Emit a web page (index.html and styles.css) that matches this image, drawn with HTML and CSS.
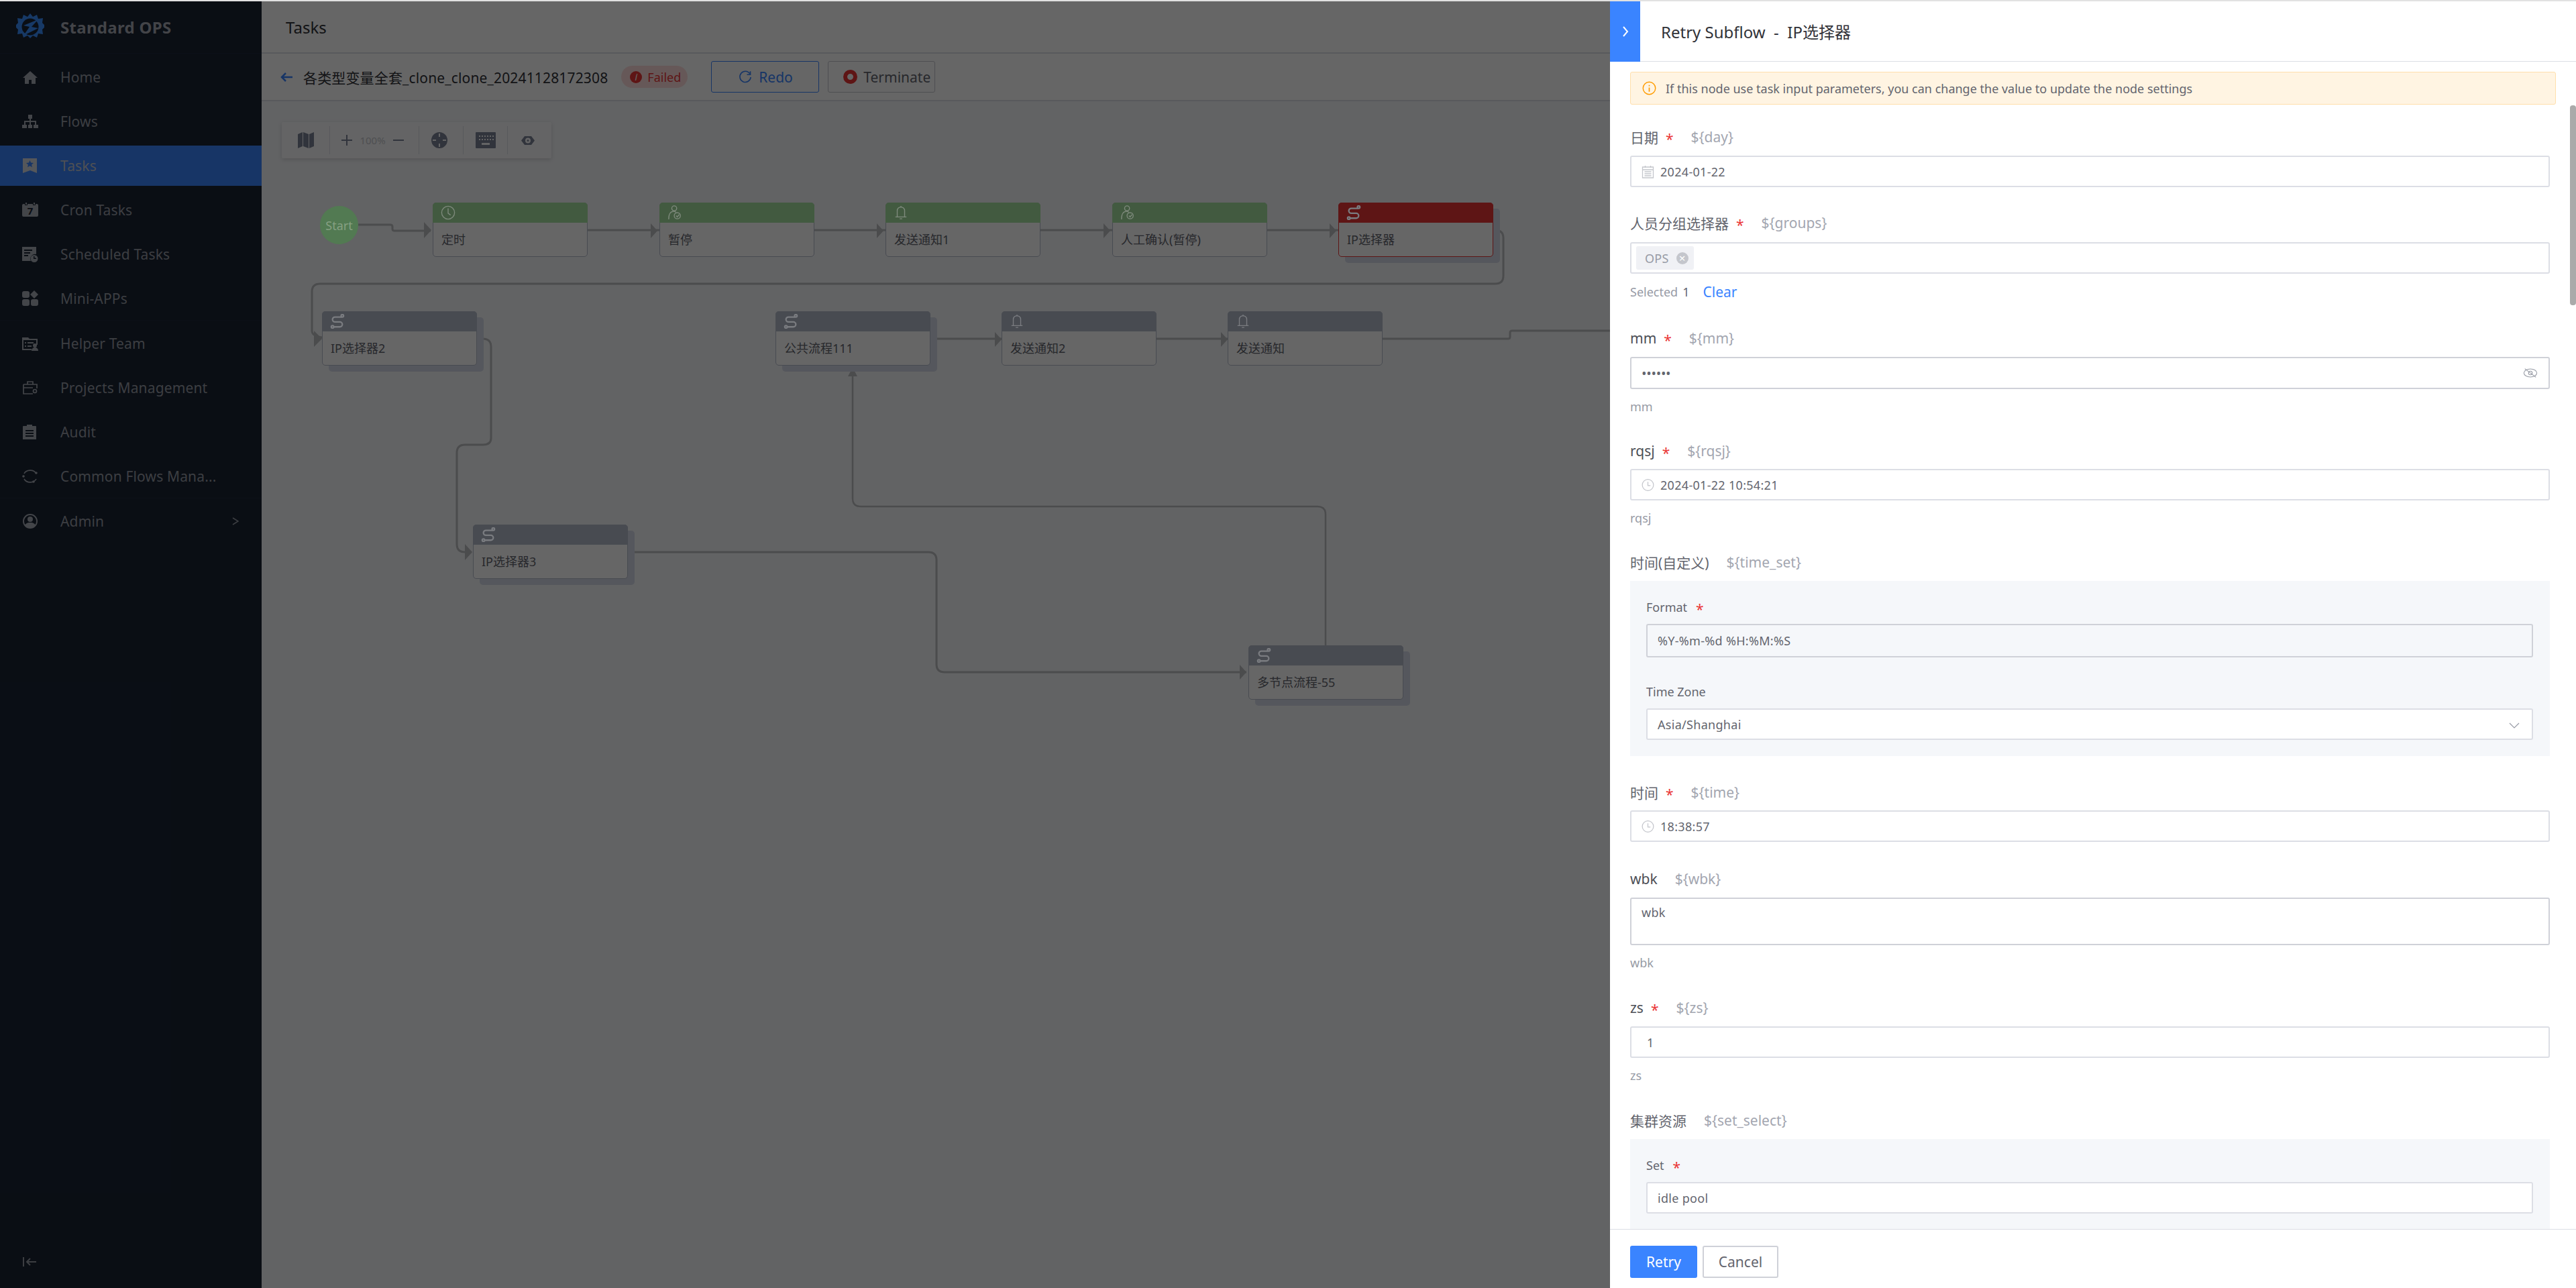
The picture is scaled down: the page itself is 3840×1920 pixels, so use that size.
FILE: index.html
```html
<!DOCTYPE html>
<html lang="en">
<head>
    <meta charset="UTF-8">
    <title>Standard OPS - Tasks</title>
    <link rel="stylesheet" href="styles.css">
</head>
<body>

<div class="top-line"></div>

<div class="app">
    <!-- Sidebar -->
    <aside class="sidebar">
        <div class="brand">
            <svg class="brand-logo" viewBox="0 0 42 42">
                <path fill="#3a8fff" d="M21 0l4 5 6-3 2 6 7-1-1 7 5 5-5 5 1 7-7-1-2 6-6-3-4 4-4-4-6 3-2-6-7 1 1-7-5-5 5-5-1-7 7 1 2-6 6 3z"/>
                <circle cx="21" cy="20" r="12.500" fill="#192334"/>
                <path fill="#3a8fff" d="M33 9L11 18l9 2-9 13 22-11-10-2z"/>
            </svg>
            <span class="brand-name">Standard OPS</span>
        </div>
        <nav class="menu">
            <a class="menu-item"><svg class="menu-icon" viewBox="0 0 24 24"><path d="M12 3L1 13h3v9h6v-6h4v6h6v-9h3z"/></svg>Home</a>
            <a class="menu-item"><svg class="menu-icon" viewBox="0 0 24 24"><path d="M9 2h6v6h-2v3h8v6h3v5h-7v-5h2v-4h-6v4h2v5H9v-5h2v-4H5v4h2v5H0v-5h3v-6h8V8H9z"/></svg>Flows</a>
            <a class="menu-item active"><svg class="menu-icon" viewBox="0 0 24 24"><path fill-rule="evenodd" d="M1 1h21v22l-10-4-11 4zM11.500 4l-1.600 3.500-3.900.4 2.900 2.600-.8 3.800 3.400-2 3.400 2-.8-3.800 2.900-2.600-3.900-.4z"/></svg>Tasks</a>
            <a class="menu-item"><svg class="menu-icon" viewBox="0 0 24 24"><path d="M5 1h2v3H5zM17 1h2v3h-2zM2 3h2v2h4V3h8v2h4V3h2a2 2 0 0 1 2 2v15a2 2 0 0 1-2 2H2a2 2 0 0 1-2-2V5a2 2 0 0 1 2-2z"/><text x="12" y="19" text-anchor="middle" class="cal-day">7</text></svg>Cron Tasks</a>
            <a class="menu-item"><svg class="menu-icon" viewBox="0 0 24 24"><path fill-rule="evenodd" d="M0 1h21v11a7 7 0 0 0-8 10H0zM3 5v2h12V5zM3 9v2h9V9zM3 13v2h6v-2z"/><path fill-rule="evenodd" d="M18 13a5.500 5.500 0 1 1 0 11a5.500 5.500 0 1 1 0-11zM17 15v4h4v-1.500h-2.500V15z"/></svg>Scheduled Tasks</a>
            <a class="menu-item"><svg class="menu-icon" viewBox="0 0 24 24"><rect x="0" y="1" width="11" height="10" rx="3"/><rect x="0" y="13" width="11" height="10" rx="3"/><rect x="13" y="13" width="11" height="10" rx="3"/><path d="M18 0l6 6-6 6-6-6z"/></svg>Mini-APPs</a>
            <div class="menu-divider"></div>
            <a class="menu-item"><svg class="menu-icon" viewBox="0 0 24 24"><path fill-rule="evenodd" d="M0 3h9l2 2h12v9h-2V7H2v13h12v2H0zM4 10h2v2H4zM8 10h9v2H8zM4 15h2v2H4zM8 15h6v2H8z"/><circle cx="19" cy="15" r="3"/><path d="M14 23c0-3 2-5 5-5s5 2 5 5z"/></svg>Helper Team</a>
            <a class="menu-item"><svg class="menu-icon" viewBox="0 0 24 24"><path fill="none" stroke-width="1.700" d="M8 7V3h8v4M2 7h20v6M2 7v14h14M2 12h14"/><circle cx="19" cy="17" r="2.500" fill="none" stroke-width="1.700"/></svg>Projects Management</a>
            <a class="menu-item"><svg class="menu-icon" viewBox="0 0 24 24"><path fill-rule="evenodd" d="M7 1h8v2h5a1 1 0 0 1 1 1v19H1V4a1 1 0 0 1 1-1h5zM5 9v2h12V9zM5 13v2h12v-2zM5 17v2h12v-2z"/></svg>Audit</a>
            <a class="menu-item"><svg class="menu-icon" viewBox="0 0 24 24"><path fill="none" stroke-width="1.600" d="M3 8C6 2 17 1 21 8M21 16c-3 6-14 7-18 0"/><circle cx="2" cy="12" r="1.800"/><circle cx="21" cy="7" r="1.800"/><circle cx="17" cy="20" r="1.800"/></svg><span class="menu-text">Common Flows Mana...</span></a>
            <div class="menu-divider"></div>
            <a class="menu-item"><svg class="menu-icon" viewBox="0 0 24 24"><path fill-rule="evenodd" d="M12 1a11 11 0 1 1 0 22a11 11 0 1 1 0-22zM12 3a9 9 0 0 0-7.500 14c2-2.500 4.500-3 7.500-3s5.500.5 7.500 3A9 9 0 0 0 12 3zM12 5a4 4 0 1 1 0 8a4 4 0 1 1 0-8z"/></svg>Admin<svg class="menu-arrow" viewBox="0 0 10 12"><path d="M1 1l8 5-8 5" fill="none" stroke-width="1.500"/></svg></a>
        </nav>
        <svg class="collapse-icon" viewBox="0 0 22 14"><path d="M1 0v14M20 7H6M11 2L6 7l5 5" fill="none" stroke-width="2"/></svg>
    </aside>

    <!-- Main content -->
    <main class="main">
        <div class="page-title">Tasks</div>
        <div class="task-bar">
            <svg class="back-icon" viewBox="0 0 20 16"><path d="M19 8H3M9 2L3 8l6 6" fill="none" stroke-width="2.500"/></svg>
            <span class="task-name">各类型变量全套_clone_clone_20241128172308</span>
            <span class="status-pill"><span class="status-dot">i</span>Failed</span>
            <button class="btn-redo"><svg class="btn-icon" viewBox="0 0 16 16"><path d="M13.500 4A6.500 6.500 0 1 0 14.500 8" fill="none" stroke-width="1.300"/><path d="M14 1v4h-4" fill="none" stroke-width="1.300"/></svg>Redo</button>
            <button class="btn-terminate"><span class="stop-dot"></span>Terminate</button>
        </div>

        <div class="canvas">
            <div class="toolbar">
                <svg class="tool-map" viewBox="0 0 24 24"><path d="M0 3l7-3v21l-7 3zM8 0l8 3v21l-8-3zM17 3l7-3v21l-7 3z"/></svg>
                <span class="tool-sep"></span>
                <svg class="tool-zoom" viewBox="0 0 16 16"><path d="M8 0v16M0 8h16" fill="none" stroke-width="2"/></svg>
                <span class="tool-percent">100%</span>
                <svg class="tool-zoom" viewBox="0 0 16 16"><path d="M0 8h16" fill="none" stroke-width="2"/></svg>
                <span class="tool-sep sep-a"></span>
                <svg class="tool-locate" viewBox="0 0 24 24"><path fill-rule="evenodd" d="M12 0a12 12 0 1 1 0 24a12 12 0 1 1 0-24zM11 2v5h2V2zM2 11v2h5v-2zM17 11v2h5v-2zM11 17v5h2v-5z"/></svg>
                <span class="tool-sep sep-b"></span>
                <svg class="tool-keys" viewBox="0 0 30 24"><path fill-rule="evenodd" d="M1 0h28a1 1 0 0 1 1 1v22a1 1 0 0 1-1 1H1a1 1 0 0 1-1-1V1a1 1 0 0 1 1-1zM5 5v2h2V5zM9 5v2h2V5zM13 5v2h2V5zM17 5v2h2V5zM21 5v2h2V5zM25 5v2h2V5zM5 10v2h2v-2zM9 10v2h2v-2zM13 10v2h2v-2zM17 10v2h2v-2zM21 10v2h2v-2zM25 10v2h2v-2zM9 16v3h12v-3z"/></svg>
                <span class="tool-sep sep-c"></span>
                <svg class="tool-eye" viewBox="0 0 20 13"><path fill-rule="evenodd" d="M5 0h10l5 6.500L15 13H5L0 6.500zM10 2.500a4 4 0 1 0 0 8a4 4 0 1 0 0-8zM10 5a1.500 1.500 0 1 1 0 3a1.500 1.500 0 1 1 0-3z"/></svg>
            </div>

            <!-- Flow edges, in canvas coordinates -->
            <svg class="edges" viewBox="0 0 2010 1769">
                <path d="M144 184h48q3 0 3 3v3q0 3 3 3h54"/>
                <path d="M486 192h107"/>
                <path d="M823 192h107"/>
                <path d="M1161 192h107"/>
                <path d="M1498 192h107"/>
                <path d="M1835 192h4q12 0 12 12v56q0 12-12 12H87q-12 0-12 12v58q0 8 15 10"/>
                <path d="M321 354h9q12 0 12 12v136q0 10-12 10h-27q-12 0-12 12v136q0 12 12 12h10"/>
                <path d="M996 354h108"/>
                <path d="M1333 354h107"/>
                <path d="M1670 354h188q3 0 3-3v-6q0-3 3-3h146"/>
                <path d="M545 672h449q12 0 12 12v155q0 12 12 12h450"/>
                <path d="M1586 811V616q0-12-12-12H893q-12 0-12-12V397" class="edge-thin"/>
                <path class="edge-head" d="M242 180l11 12-11 12z"/>
                <path class="edge-head" d="M580 182l10 11-10 11z"/>
                <path class="edge-head" d="M917 182l10 11-10 11z"/>
                <path class="edge-head" d="M1255 182l10 11-10 11z"/>
                <path class="edge-head" d="M1592 182l10 11-10 11z"/>
                <path class="edge-head" d="M78 342l12 12-12 12z"/>
                <path class="edge-head" d="M303 660l11 12-11 12z"/>
                <path class="edge-head" d="M1093 344l10 11-10 11z"/>
                <path class="edge-head" d="M1430 344l10 11-10 11z"/>
                <path class="edge-head" d="M1458 840l10 11-10 11z"/>
                <path class="edge-head" d="M881 397l7 13h-14z"/>
            </svg>

            <div class="start-node">Start</div>

            <div class="node done n-timer"><div class="node-head"><svg class="node-icon" viewBox="0 0 24 24"><circle cx="12" cy="12" r="10.500"/><path d="M12 5v8l4 3"/></svg></div><div class="node-text">定时</div></div>
            <div class="node done n-pause"><div class="node-head"><svg class="node-icon" viewBox="0 0 24 24"><circle cx="11" cy="5" r="4"/><path d="M2 23c0-8 3-13 8-13 2 0 3 .5 4 1.500"/><circle cx="16" cy="17" r="5"/><path d="M14 17l2 2 3-4"/></svg></div><div class="node-text">暂停</div></div>
            <div class="node done n-notify1"><div class="node-head"><svg class="node-icon" viewBox="0 0 24 24"><path d="M12 1v2M6 19V9c0-4 3-6 6-6s6 2 6 6v10zM3 19h18M10 22h4"/></svg></div><div class="node-text">发送通知1</div></div>
            <div class="node done n-confirm"><div class="node-head"><svg class="node-icon" viewBox="0 0 24 24"><circle cx="11" cy="5" r="4"/><path d="M2 23c0-8 3-13 8-13 2 0 3 .5 4 1.500"/><circle cx="16" cy="17" r="5"/><path d="M14 17l2 2 3-4"/></svg></div><div class="node-text">人工确认(暂停)</div></div>
            <div class="node failed stacked n-ip1"><div class="node-head"><svg class="node-icon icon-sub" viewBox="0 0 24 24"><path d="M19 5H8a4 4 0 0 0 0 8h8a4 4 0 0 1 0 8H6"/><circle cx="20" cy="3" r="2"/><circle cx="4" cy="21" r="2"/></svg></div><div class="node-text">IP选择器</div></div>

            <div class="node stacked n-ip2"><div class="node-head"><svg class="node-icon icon-sub" viewBox="0 0 24 24"><path d="M19 5H8a4 4 0 0 0 0 8h8a4 4 0 0 1 0 8H6"/><circle cx="20" cy="3" r="2"/><circle cx="4" cy="21" r="2"/></svg></div><div class="node-text">IP选择器2</div></div>
            <div class="node stacked n-common"><div class="node-head"><svg class="node-icon icon-sub" viewBox="0 0 24 24"><path d="M19 5H8a4 4 0 0 0 0 8h8a4 4 0 0 1 0 8H6"/><circle cx="20" cy="3" r="2"/><circle cx="4" cy="21" r="2"/></svg></div><div class="node-text">公共流程111</div></div>
            <div class="node n-notify2"><div class="node-head"><svg class="node-icon" viewBox="0 0 24 24"><path d="M12 1v2M6 19V9c0-4 3-6 6-6s6 2 6 6v10zM3 19h18M10 22h4"/></svg></div><div class="node-text">发送通知2</div></div>
            <div class="node n-notify"><div class="node-head"><svg class="node-icon" viewBox="0 0 24 24"><path d="M12 1v2M6 19V9c0-4 3-6 6-6s6 2 6 6v10zM3 19h18M10 22h4"/></svg></div><div class="node-text">发送通知</div></div>
            <div class="node stacked n-ip3"><div class="node-head"><svg class="node-icon icon-sub" viewBox="0 0 24 24"><path d="M19 5H8a4 4 0 0 0 0 8h8a4 4 0 0 1 0 8H6"/><circle cx="20" cy="3" r="2"/><circle cx="4" cy="21" r="2"/></svg></div><div class="node-text">IP选择器3</div></div>
            <div class="node stacked n-multi"><div class="node-head"><svg class="node-icon icon-sub" viewBox="0 0 24 24"><path d="M19 5H8a4 4 0 0 0 0 8h8a4 4 0 0 1 0 8H6"/><circle cx="20" cy="3" r="2"/><circle cx="4" cy="21" r="2"/></svg></div><div class="node-text">多节点流程-55</div></div>
        </div>
    </main>
</div>

<!-- Dark mask behind the drawer -->
<div class="mask"></div>

<!-- Retry drawer -->
<section class="drawer">
    <div class="drawer-tab"><svg class="tab-arrow" viewBox="0 0 10 16"><path d="M2 1l6 7-6 7" fill="none" stroke-width="2"/></svg></div>
    <header class="drawer-head">Retry Subflow&nbsp; - &nbsp;IP选择器</header>

    <div class="drawer-body">
        <div class="notice">
            <svg class="notice-icon" viewBox="0 0 20 20"><circle cx="10" cy="10" r="8.800" fill="none" stroke-width="1.400"/><path d="M10 5.500v1.600M10 9v6" fill="none" stroke-width="1.600"/></svg>
            If this node use task input parameters, you can change the value to update the node settings
        </div>

        <div class="field f-day">
            <label class="field-label">日期<em class="req">*</em><span class="var-key">${day}</span></label>
            <div class="input"><svg class="input-icon" viewBox="0 0 18 20"><path d="M1 3h16v16H1zM1 7h16M5 1v3M13 1v3M4 10h10M4 13h10M4 16h10" fill="none" stroke-width="1.300"/></svg>2024-01-22</div>
        </div>

        <div class="field f-groups">
            <label class="field-label">人员分组选择器<em class="req">*</em><span class="var-key">${groups}</span></label>
            <div class="input input-tags"><span class="tag">OPS<span class="tag-close">×</span></span></div>
            <div class="selected-line"><span class="selected-label">Selected</span><span class="selected-count">1</span><a class="clear-link">Clear</a></div>
        </div>

        <div class="field f-mm">
            <label class="field-label"><b class="latin-name">mm</b><em class="req">*</em><span class="var-key">${mm}</span></label>
            <div class="input input-strong"><span class="dots">••••••</span><svg class="eye-off" viewBox="0 0 24 16"><ellipse cx="12" cy="8" rx="10.500" ry="6.500" fill="none" stroke-width="1.200"/><circle cx="12" cy="8" r="3" fill="none" stroke-width="1.200"/><path d="M3 1l18 14" fill="none" stroke-width="1.200"/></svg></div>
            <div class="help">mm</div>
        </div>

        <div class="field f-rqsj">
            <label class="field-label"><b class="latin-name">rqsj</b><em class="req">*</em><span class="var-key">${rqsj}</span></label>
            <div class="input"><svg class="input-icon" viewBox="0 0 20 20"><circle cx="10" cy="10" r="8.800" fill="none" stroke-width="1.300"/><path d="M10 5v6h4" fill="none" stroke-width="1.300"/></svg>2024-01-22 10:54:21</div>
            <div class="help">rqsj</div>
        </div>

        <div class="field f-timeset">
            <label class="field-label">时间(自定义)<span class="var-key">${time_set}</span></label>
            <div class="panel">
                <div class="sub-label">Format<em class="req">*</em></div>
                <div class="input input-disabled">%Y-%m-%d %H:%M:%S</div>
                <div class="sub-label sub-gap">Time Zone</div>
                <div class="input">Asia/Shanghai<svg class="select-arrow" viewBox="0 0 16 10"><path d="M1 1l7 7 7-7" fill="none" stroke-width="1.200"/></svg></div>
            </div>
        </div>

        <div class="field f-time">
            <label class="field-label">时间<em class="req">*</em><span class="var-key">${time}</span></label>
            <div class="input"><svg class="input-icon" viewBox="0 0 20 20"><circle cx="10" cy="10" r="8.800" fill="none" stroke-width="1.300"/><path d="M10 5v6h4" fill="none" stroke-width="1.300"/></svg>18:38:57</div>
        </div>

        <div class="field f-wbk">
            <label class="field-label"><b class="latin-name">wbk</b><span class="var-key">${wbk}</span></label>
            <div class="textarea">wbk</div>
            <div class="help">wbk</div>
        </div>

        <div class="field f-zs">
            <label class="field-label"><b class="latin-name">zs</b><em class="req">*</em><span class="var-key">${zs}</span></label>
            <div class="input input-number">1</div>
            <div class="help">zs</div>
        </div>

        <div class="field f-set">
            <label class="field-label">集群资源<span class="var-key">${set_select}</span></label>
            <div class="panel">
                <div class="sub-label">Set<em class="req">*</em></div>
                <div class="input">idle pool</div>
            </div>
        </div>

        <div class="scroll-thumb"></div>
    </div>

    <footer class="drawer-foot">
        <button class="btn-retry">Retry</button>
        <button class="btn-cancel">Cancel</button>
    </footer>
</section>

</body>
</html>
```

FILE: styles.css
```css
* {
    box-sizing: border-box;
}
body {
    margin: 0;
    width: 3840px;
    height: 1920px;
    overflow: hidden;
    position: relative;
    font-family: "Noto Sans", "Noto Sans CJK SC", sans-serif;
    background: #fff;
    color: #63656e;
}
.top-line {
    height: 2px;
    background: #e1e1e1;
}
.app {
    display: flex;
    height: 1918px;
}

/* Sidebar */
.sidebar {
    width: 390px;
    flex: none;
    background: #192334;
    position: relative;
}
.brand {
    height: 78px;
    display: flex;
    align-items: center;
    padding-left: 24px;
    border-bottom: 1px solid #1f2a3d;
}
.brand-logo {
    width: 42px;
    height: 42px;
    margin-right: 24px;
}
.brand-name {
    font-size: 24px;
    font-weight: 700;
    color: #a7abb5;
    letter-spacing: .3px;
}
.menu {
    padding-top: 5px;
}
.menu-item {
    height: 60px;
    margin-bottom: 6px;
    display: flex;
    align-items: center;
    padding-left: 33px;
    font-size: 21px;
    letter-spacing: .15px;
    color: #979ba5;
}
.menu-item.active {
    background: #3a84ff;
    color: #c4c8d2;
}
.menu-icon {
    width: 24px;
    height: 24px;
    margin-right: 33px;
    flex: none;
    fill: #a8acb6;
    stroke: #a8acb6;
    stroke-width: 0;
}
.active .menu-icon {
    fill: #d5d9e2;
    stroke: #d5d9e2;
}
.cal-day {
    font-size: 15px;
    font-weight: 700;
    fill: #192334;
    stroke: none;
}
.menu-divider {
    height: 1px;
    background: #1f2a3d;
    margin: -4px 0 4px;
}
.menu-arrow {
    width: 10px;
    height: 12px;
    position: absolute;
    right: 34px;
    stroke: #979ba5;
}
.collapse-icon {
    position: absolute;
    left: 34px;
    top: 1872px;
    width: 22px;
    height: 14px;
    stroke: #979ba5;
}

/* Main */
.main {
    flex: 1;
    display: flex;
    flex-direction: column;
    min-width: 0;
}
.page-title {
    height: 78px;
    flex: none;
    padding-left: 36px;
    display: flex;
    align-items: center;
    font-size: 24px;
    color: #313238;
    background: #fff;
    border-bottom: 2px solid #dcdee5;
}
.task-bar {
    height: 71px;
    flex: none;
    display: flex;
    align-items: center;
    padding-left: 27px;
    background: #fff;
    border-bottom: 2px solid #dcdee5;
}
.back-icon {
    width: 20px;
    height: 16px;
    stroke: #3a84ff;
    margin-right: 15px;
}
.task-name {
    font-size: 21px;
    letter-spacing: .15px;
    color: #313238;
    margin-right: 20px;
}
.status-pill {
    width: 99px;
    height: 33px;
    border-radius: 17px;
    background: #fdd;
    color: #ea3636;
    font-size: 18px;
    display: flex;
    align-items: center;
    padding-left: 13px;
    margin-right: 35px;
}
.status-dot {
    width: 18px;
    height: 18px;
    border-radius: 50%;
    background: #ea3636;
    color: #fff;
    font-size: 14px;
    font-style: italic;
    text-align: center;
    line-height: 18px;
    margin-right: 8px;
}
.btn-redo, .btn-terminate {
    height: 47px;
    font: inherit;
    font-size: 21px;
    background: #fff;
    border-radius: 3px;
    display: flex;
    align-items: center;
    padding: 0;
}
.btn-redo {
    width: 161px;
    border: 1.500px solid #3a84ff;
    color: #3a84ff;
    padding-left: 40px;
    margin-right: 13px;
}
.btn-terminate {
    width: 160px;
    border: 1.500px solid #c4c6cc;
    color: #63656e;
    padding-left: 22px;
}
.btn-icon {
    width: 20px;
    height: 22px;
    stroke: #3a84ff;
    margin-right: 10px;
}
.stop-dot {
    width: 21px;
    height: 21px;
    border-radius: 50%;
    border: 6px solid #ea3636;
    background: #fff;
    margin-right: 9px;
}

/* Canvas */
.canvas {
    flex: 1;
    position: relative;
    background: #f5f7fa;
}
.toolbar {
    position: absolute;
    left: 30px;
    top: 31px;
    width: 402px;
    height: 54px;
    display: flex;
    align-items: center;
    padding-left: 24px;
    background: #fbfbfc;
    box-shadow: 0 2px 6px rgba(0,0,0,.15);
    border-radius: 2px;
    fill: #7c8396;
    stroke: #7c8396;
    stroke-width: 0;
}
.tool-map { width: 24px; height: 24px; }
.tool-sep {
    width: 1px;
    height: 42px;
    background: #dcdee5;
    margin: 0 17px 0 23px;
}
.tool-zoom { width: 16px; height: 16px; stroke-width: 1; }
.tool-percent {
    font-size: 15px;
    color: #c4c6cc;
    width: 61px;
    text-align: center;
}
.tool-locate { width: 24px; height: 24px; }
.tool-keys { width: 30px; height: 24px; }
.tool-eye { width: 20px; height: 13px; }
.sep-a { margin: 0 18px 0 22px; }
.sep-b { margin: 0 18px 0 23px; }
.sep-c { margin: 0 20px 0 17px; }

.edges {
    position: absolute;
    left: 0;
    top: 0;
    width: 2010px;
    height: 1769px;
    fill: none;
    stroke: #bcbdc0;
    stroke-width: 3;
}
.edges .edge-thin {
    stroke-width: 2.500;
}
.edges .edge-head {
    fill: #bcbdc0;
    stroke: none;
}
.start-node {
    position: absolute;
    left: 87px;
    top: 156px;
    width: 57px;
    height: 57px;
    border-radius: 50%;
    background: #527a52;
    color: #86a082;
    font-size: 18px;
    display: flex;
    align-items: center;
    justify-content: center;
    z-index: 30;
}
.node {
    position: absolute;
    width: 231px;
    height: 81px;
    background: #fff;
    border: 1px solid #b5bbcb;
    border-radius: 5px;
    font-size: 18px;
}
.node.stacked {
    box-shadow: 10px 9px 0 #d4d9e8;
}
.node-head {
    height: 30px;
    margin: -1px -1px 0;
    padding: 4px 0 0 12px;
    background: #b5bbcb;
    border-radius: 5px 5px 0 0;
}
.done .node-head { background: #a5e0a0; }
.failed { border-color: #ea3636; }
.failed .node-head { background: #ea3636; }
.node-icon {
    display: block;
    width: 22px;
    height: 22px;
    position: relative;
    fill: none;
    stroke: #7a7c80;
    stroke-width: 1.500;
    z-index: 30;
}
.done .node-icon { stroke: #7e8a7c; }
.icon-sub { stroke-width: 2.500; }
.node-text {
    padding: 12px 0 0 12px;
    color: #63656e;
    line-height: 26px;
}
.n-timer { left: 255px; top: 151px; }
.n-pause { left: 593px; top: 151px; }
.n-notify1 { left: 930px; top: 151px; }
.n-confirm { left: 1268px; top: 151px; }
.n-ip1 { left: 1605px; top: 151px; }
.n-ip2 { left: 90px; top: 313px; }
.n-common { left: 766px; top: 313px; }
.n-notify2 { left: 1103px; top: 313px; }
.n-notify { left: 1440px; top: 313px; }
.n-ip3 { left: 315px; top: 631px; }
.n-multi { left: 1471px; top: 811px; }

/* Mask and drawer */
.mask {
    position: absolute;
    left: 0;
    top: 2px;
    right: 0;
    bottom: 0;
    background: rgba(0,0,0,.6);
    z-index: 20;
}
.drawer {
    position: absolute;
    left: 2400px;
    top: 2px;
    width: 1440px;
    bottom: 0;
    background: #fff;
    z-index: 40;
    display: flex;
    flex-direction: column;
}
.drawer-tab {
    position: absolute;
    left: 0;
    top: 0;
    width: 45px;
    height: 90px;
    background: #3a84ff;
    display: flex;
    align-items: center;
    justify-content: center;
}
.tab-arrow {
    width: 10px;
    height: 16px;
    stroke: #fff;
}
.drawer-head {
    height: 90px;
    flex: none;
    padding-left: 76px;
    display: flex;
    align-items: center;
    font-size: 24px;
    color: #313238;
    border-bottom: 1px solid #dcdee5;
}
.drawer-body {
    flex: 1;
    overflow: hidden;
    position: relative;
    padding: 15px 39px 0 30px;
}
.scroll-thumb {
    position: absolute;
    right: 0;
    top: 65px;
    width: 9px;
    height: 298px;
    border-radius: 4px;
    background: #aaa;
}
.notice {
    height: 49px;
    margin-right: -9px;
    display: flex;
    align-items: center;
    padding-left: 17px;
    font-size: 18px;
    background: #fff4e2;
    border: 1px solid #ffdfac;
    border-radius: 3px;
}
.notice-icon {
    width: 21px;
    height: 21px;
    stroke: #ff9c01;
    margin-right: 14px;
    flex: none;
}
.field-label {
    display: flex;
    align-items: center;
    height: 30px;
    font-size: 21px;
    color: #63656e;
}
.latin-name {
    font-weight: 400;
    color: #4d4f56;
}
.req {
    font-style: normal;
    color: #ea3636;
    font-size: 21px;
    margin-left: 11px;
    line-height: 1;
    position: relative;
    top: 3px;
}
.var-key {
    color: #a3a6b0;
    margin-left: 26px;
}
.input, .textarea {
    height: 47px;
    background: #fff;
    border: 2px solid #dcdee5;
    border-radius: 3px;
    font-size: 18px;
    letter-spacing: .3px;
    color: #63656e;
    display: flex;
    align-items: center;
    padding-left: 15px;
    position: relative;
}
.input-strong {
    border-color: #cfd1d8;
    height: 48px;
}
.input-number {
    padding-left: 23px;
}
.input-disabled {
    height: 50px;
    background: #f5f7fa;
    border-color: #cfd1d8;
}
.input-icon {
    width: 19px;
    height: 20px;
    stroke: #c4c6cc;
    margin: 0 9px 0 0;
    flex: none;
}
.input-tags {
    padding-left: 7px;
}
.tag {
    height: 35px;
    width: 86px;
    background: #f0f1f5;
    border-radius: 3px;
    color: #979ba5;
    display: flex;
    align-items: center;
    padding-left: 13px;
}
.tag-close {
    width: 18px;
    height: 18px;
    margin-left: 11px;
    border-radius: 50%;
    background: #c4c6cc;
    color: #fff;
    font-size: 17px;
    line-height: 18px;
    text-align: center;
}
.selected-line {
    display: flex;
    align-items: center;
    height: 30px;
    margin-top: 12px;
    font-size: 18px;
}
.selected-label {
    color: #979ba5;
    margin-right: 7px;
}
.selected-count {
    margin-right: 20px;
}
.clear-link {
    font-size: 21px;
    color: #3a84ff;
}
.dots {
    font-size: 20px;
    letter-spacing: -.3px;
}
.eye-off {
    position: absolute;
    right: 16px;
    top: 14px;
    width: 22px;
    height: 16px;
    stroke: #979ba5;
}
.help {
    font-size: 18px;
    color: #979ba5;
    height: 28px;
    margin-top: 12px;
    line-height: 28px;
}
.panel {
    background: #f5f7fa;
    padding: 24px 25px 24px 24px;
    margin-top: 13px;
}
.sub-label {
    display: flex;
    align-items: center;
    height: 30px;
    font-size: 18px;
    margin-bottom: 10px;
}
.sub-label .req {
    margin-left: 13px;
}
.sub-gap {
    margin-top: 36px;
}
.select-arrow {
    position: absolute;
    right: 18px;
    top: 19px;
    width: 16px;
    height: 10px;
    stroke: #979ba5;
}
.textarea {
    height: 71px;
    align-items: flex-start;
    padding: 8px 0 0 15px;
    border-color: #cfd1d8;
}
.f-day { margin-top: 33px; }
.f-day .field-label { margin-bottom: 13px; }
.f-groups { margin-top: 38px; }
.f-groups .field-label { margin-bottom: 14px; }
.f-mm { margin-top: 39px; }
.f-mm .field-label { margin-bottom: 13px; }
.f-rqsj { margin-top: 37px; }
.f-rqsj .field-label { margin-bottom: 12px; }
.f-timeset { margin-top: 37px; }
.f-time { margin-top: 39px; }
.f-time .field-label { margin-bottom: 12px; }
.f-wbk { margin-top: 40px; }
.f-wbk .field-label { margin-bottom: 13px; }
.f-zs { margin-top: 38px; }
.f-zs .field-label { margin-bottom: 13px; }
.f-set { margin-top: 38px; }

.drawer-foot {
    height: 88px;
    flex: none;
    border-top: 1px solid #dcdee5;
    background: #fff;
    display: flex;
    align-items: flex-start;
    gap: 8px;
    padding: 24px 0 0 30px;
    position: relative;
}
.btn-retry, .btn-cancel {
    height: 48px;
    font: inherit;
    font-size: 21px;
    border-radius: 3px;
    padding: 0;
}
.btn-retry {
    width: 100px;
    background: #3a84ff;
    border: none;
    color: #fff;
}
.btn-cancel {
    width: 113px;
    background: #fff;
    border: 2px solid #cfd1d8;
    color: #63656e;
}
```
